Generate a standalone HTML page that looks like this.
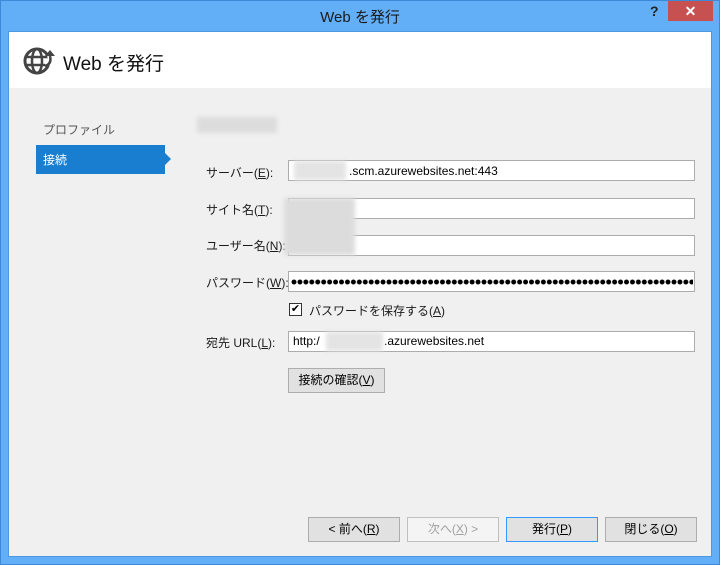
<!DOCTYPE html>
<html><head><meta charset="utf-8"><style>
*{margin:0;padding:0;box-sizing:border-box}
body{width:720px;height:565px;background:#63aff7;font-family:"Liberation Sans","Noto Sans CJK JP",sans-serif;position:relative;overflow:hidden;font-size:12px;color:#000}
.abs{position:absolute}
.frame{position:absolute;left:0;top:0;width:720px;height:565px;border:1px solid #3a8ad8}
.inner{position:absolute;left:8px;top:31px;width:704px;height:526px;background:#f0f0f0;border:1px solid #4d98e0}
.hdr{position:absolute;left:9px;top:32px;width:702px;height:56px;background:#fff}
.lbl{position:absolute;font-size:12px;color:#1a1a1a}
.fld{position:absolute;left:288px;width:407px;height:21px;background:#fff;border:1px solid #acacac;font-size:12px;padding:3px 0 0 4px;white-space:nowrap;overflow:hidden}
.blur{position:absolute;background:#dcdcdc;filter:blur(2px)}
.btn{position:absolute;top:517px;width:92px;height:25px;background:#e1e1e1;border:1px solid #adadad;text-align:center;font-size:12px;line-height:23px}
u{text-decoration:underline}
</style></head><body>
<div class="frame"></div>
<div class="abs" style="left:0;top:6px;width:720px;text-align:center;font-size:15px;color:#1a1a1a">Web を発行</div>
<div class="abs" style="left:650px;top:3px;font-size:14px;font-weight:bold;color:#222">?</div>
<div class="abs" style="left:668px;top:1px;width:45px;height:20px;background:#c75050;color:#fff;text-align:center;font-size:14px;font-weight:bold;line-height:20px">✕</div>
<div class="inner"></div>
<div class="hdr"></div>
<svg class="abs" style="left:23px;top:46px" width="32" height="30" viewBox="0 0 32 30">
<circle cx="14" cy="15" r="12" fill="none" stroke="#444" stroke-width="3"/>
<ellipse cx="14" cy="15" rx="5" ry="12" fill="none" stroke="#444" stroke-width="2.5"/>
<line x1="2" y1="11" x2="26" y2="11" stroke="#444" stroke-width="2.5"/>
<line x1="2" y1="19" x2="26" y2="19" stroke="#444" stroke-width="2.5"/>
<path d="M22 18 Q29 16 27 8" fill="none" stroke="#fff" stroke-width="6"/>
<path d="M22 20 Q29 18 27 10" fill="none" stroke="#444" stroke-width="2.5"/>
<polygon points="22,10 32,10 27,4" fill="#444"/>
</svg>
<div class="abs" style="left:63px;top:49px;font-size:19px;color:#111">Web を発行</div>
<div class="lbl" style="left:43px;top:121px;color:#555">プロファイル</div>
<div class="abs" style="left:36px;top:145px;width:129px;height:29px;background:#1a7ed0"></div>
<div class="abs" style="left:165px;top:153px;width:0;height:0;border-top:6px solid transparent;border-bottom:6px solid transparent;border-left:6px solid #1a7ed0"></div>
<div class="abs" style="left:43px;top:151px;color:#fff;font-size:12px">接続</div>
<div class="blur" style="left:197px;top:117px;width:80px;height:16px"></div>
<div class="lbl" style="left:206px;top:164px">サーバー(<u>E</u>):</div>
<div class="lbl" style="left:206px;top:201px">サイト名(<u>T</u>):</div>
<div class="lbl" style="left:206px;top:237px">ユーザー名(<u>N</u>):</div>
<div class="lbl" style="left:206px;top:274px">パスワード(<u>W</u>):</div>
<div class="lbl" style="left:206px;top:334px">宛先 URL(<u>L</u>):</div>
<div class="fld" style="top:160px;padding-left:60px">.scm.azurewebsites.net:443</div>
<div class="blur" style="left:294px;top:161px;width:52px;height:19px;background:#e4e4e4"></div>
<div class="fld" style="top:198px"></div>
<div class="fld" style="top:235px"></div>
<div class="blur" style="left:284px;top:198px;width:71px;height:57px"></div>
<div class="fld" style="top:271px;padding:0"></div>
<div class="abs" style="left:291px;top:279px;width:402px;height:6px;background:radial-gradient(circle at 3px 3px,#000 2.2px,transparent 2.7px) 0 0/5.95px 6px repeat-x"></div>
<div class="abs" style="left:289px;top:303px;width:13px;height:13px;background:#fff;border:1px solid #333;font-size:11px;line-height:11px;text-align:center">✔</div>
<div class="lbl" style="left:309px;top:302px">パスワードを保存する(<u>A</u>)</div>
<div class="fld" style="top:331px"></div>
<div class="lbl" style="left:293px;top:334px;color:#000">http:/</div>
<div class="lbl" style="left:384px;top:334px;color:#000">.azurewebsites.net</div>
<div class="blur" style="left:326px;top:332px;width:57px;height:19px;background:#e4e4e4"></div>
<div class="btn" style="left:288px;top:368px;width:97px">接続の確認(<u>V</u>)</div>
<div class="btn" style="left:308px">&lt; 前へ(<u>R</u>)</div>
<div class="btn" style="left:407px;background:#f4f4f4;border-color:#bfbfbf;color:#a0a0a0">次へ(<u>X</u>) &gt;</div>
<div class="btn" style="left:506px;border-color:#3399ff">発行(<u>P</u>)</div>
<div class="btn" style="left:605px">閉じる(<u>O</u>)</div>
</body></html>
